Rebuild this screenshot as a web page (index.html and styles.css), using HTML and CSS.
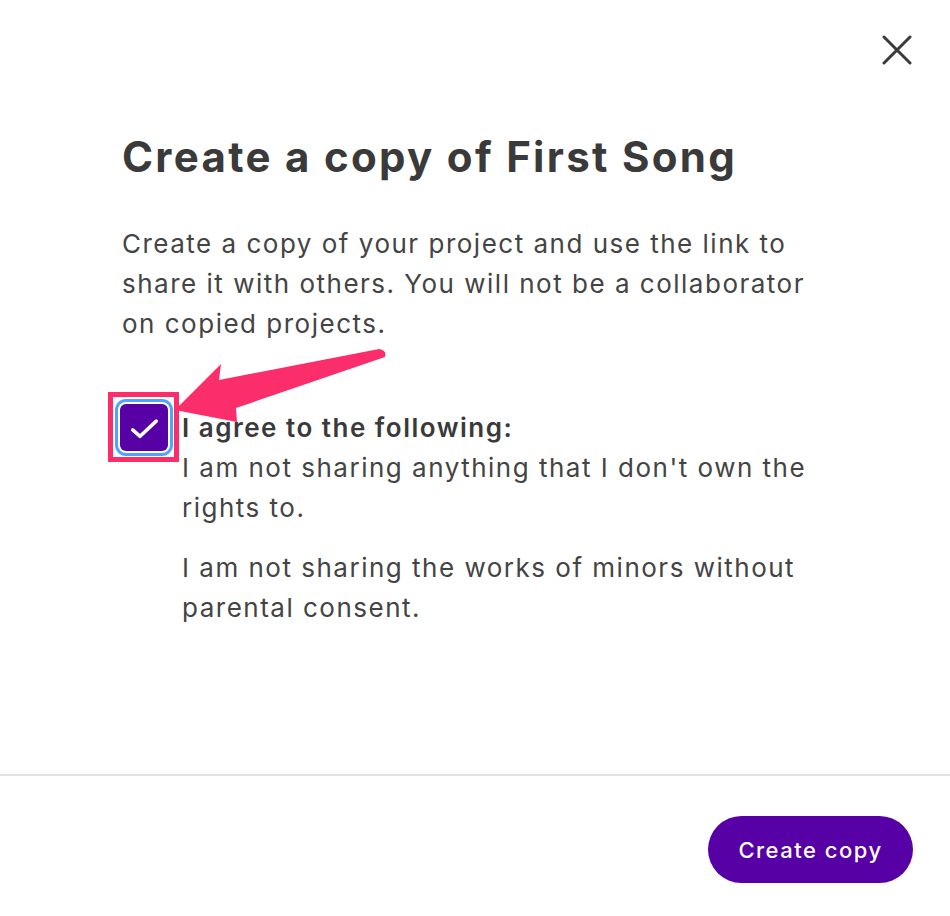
FILE: index.html
```html
<!DOCTYPE html>
<html lang="en">
<head>
  <meta charset="UTF-8" />
  <title>Create a copy</title>
  <link rel="stylesheet" href="styles.css">
</head>
<body>
  <div class="dialog">
    <div class="dialog-top">
      <button class="close" aria-label="Close">
        <svg width="30" height="30" viewBox="0 0 30 30">
          <path d="M2 2 L28 28 M28 2 L2 28" stroke="#3a3a3a" stroke-width="3" stroke-linecap="round" fill="none"/>
        </svg>
      </button>
    </div>

    <div class="dialog-body">
      <h1>Create a copy of First Song</h1>
      <p class="intro">Create a copy of your project and use the link to share it with others. You will not be a collaborator on copied projects.</p>

      <div class="agree">
        <div class="highlight">
          <span class="check">
            <svg width="49" height="47" viewBox="0 0 49 47">
              <path d="M13 26 L20.5 32.5 L37 17" stroke="#fff" stroke-width="3.6" stroke-linecap="round" stroke-linejoin="round" fill="none"/>
            </svg>
          </span>
        </div>
        <div class="agree-text">
          <div class="agree-title">I agree to the following:</div>
          <p>I am not sharing anything that I don't own the rights to.</p>
          <p>I am not sharing the works of minors without parental consent.</p>
        </div>
      </div>
    </div>

    <div class="dialog-footer">
      <button class="btn-primary">Create copy</button>
    </div>

    <!-- annotation arrow -->
    <svg class="arrow" width="230" height="90" viewBox="170 340 230 90">
      <path d="M175 410 L221 364 L219 380 L379 349 Q387 350 385 357 L236 408 L237 422 Z" fill="#fb2d6b"/>
    </svg>
  </div>
</body>
</html>
```

FILE: styles.css
```css
* {
  box-sizing: border-box;
}

body {
  margin: 0;
  font-family: 'Inter', 'Noto Sans', sans-serif;
  background: #fff;
  color: #3d3d3d;
}

.dialog {
  position: relative;
  width: 950px;
  height: 916px;
  display: flex;
  flex-direction: column;
}

.dialog-top {
  display: flex;
  justify-content: flex-end;
  padding: 26px 29px 0 0;
}

.close {
  width: 48px;
  height: 48px;
  border: 0;
  background: none;
  padding: 0;
  display: flex;
  align-items: center;
  justify-content: center;
  cursor: pointer;
}

.dialog-body {
  flex: 1;
  padding: 58px 0 0 122px;
  width: 830px;
}

h1 {
  margin: 0;
  font-size: 42px;
  line-height: 50px;
  font-weight: 700;
  color: #3a3a3a;
  letter-spacing: 2.3px;
}

.intro {
  margin: 42px 0 0;
  font-size: 26px;
  line-height: 40px;
  letter-spacing: 1.5px;
  color: #444;
}

.agree {
  display: flex;
  align-items: flex-start;
  gap: 3px;
  margin: 48px 0 0 -14px;
}

.highlight {
  border: 5px solid #fb2d6b;
  padding: 7px 6px 6px 7px;
  flex: none;
}

.check {
  display: flex;
  width: 48px;
  height: 47px;
  background: #5600a6;
  border-radius: 6px;
  box-shadow: 0 0 0 2px #fff, 0 0 0 5px #4ea5ff;
}

.agree-text {
  padding-top: 16px;
  font-size: 26px;
  line-height: 40px;
  letter-spacing: 1.5px;
  color: #444;
}

.agree-title {
  font-weight: 600;
  color: #3a3a3a;
}

.agree-text p {
  margin: 0 0 20px;
}

.dialog-footer {
  border-top: 2px solid #e4e4e4;
  padding: 40px 37px 33px;
  display: flex;
  justify-content: flex-end;
}

.btn-primary {
  height: 67px;
  width: 205px;
  border: 0;
  border-radius: 34px;
  background: #5600a6;
  color: #fff;
  font-family: inherit;
  font-size: 22px;
  font-weight: 500;
  letter-spacing: 1.5px;
  cursor: pointer;
}

.arrow {
  position: absolute;
  left: 170px;
  top: 340px;
}
```
